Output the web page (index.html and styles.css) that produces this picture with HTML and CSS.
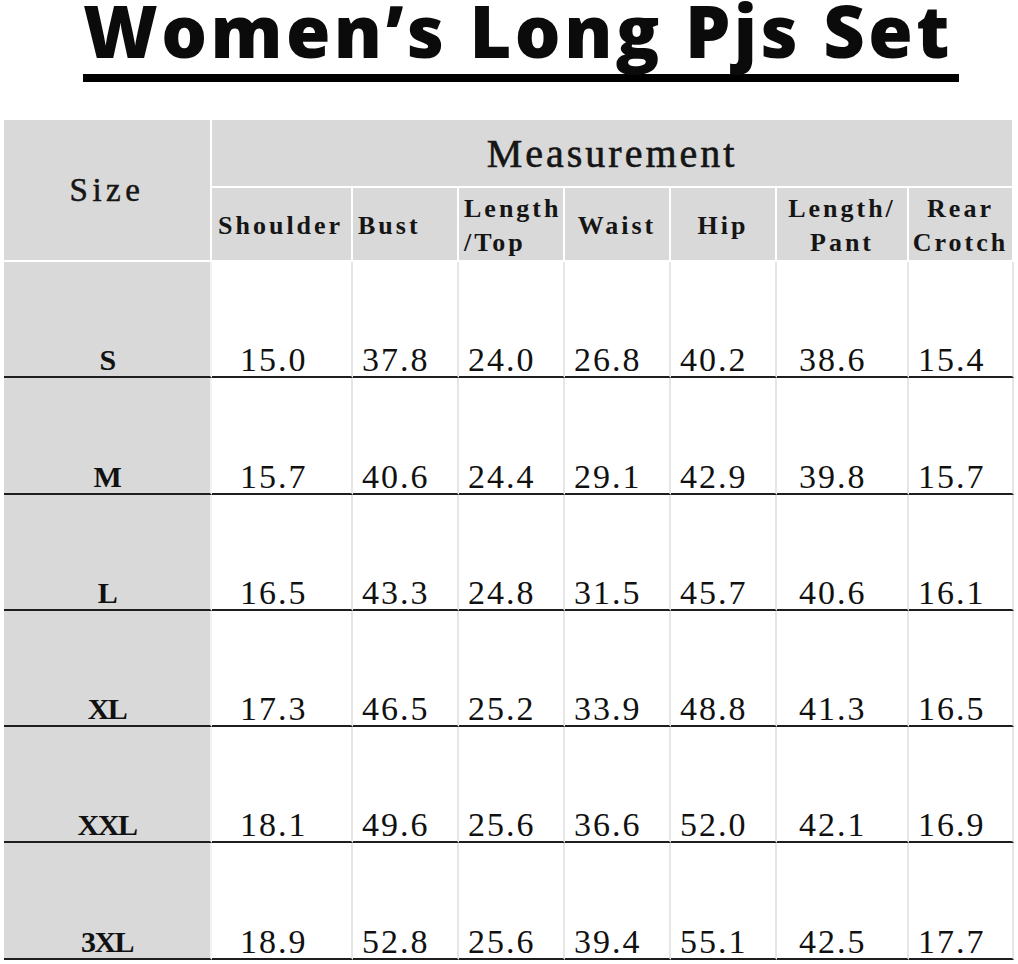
FILE: index.html
```html
<!DOCTYPE html>
<html lang="en">
<head>
<meta charset="utf-8">
<title>Women’s Long Pjs Set</title>
<link rel="stylesheet" href="styles.css">
</head>
<body>
<div class="page">
  <header class="head">
    <h1 class="title">Women’s Long Pjs Set</h1>
  </header>
  <table class="chart">
    <colgroup>
      <col class="w-size"><col class="w-sh"><col class="w-n"><col class="w-n"><col class="w-n"><col class="w-n"><col class="w-pt"><col class="w-rc">
    </colgroup>
    <thead>
      <tr class="hr1">
        <th class="h-size" rowspan="2">Size</th>
        <th class="h-meas" colspan="7">Measurement</th>
      </tr>
      <tr class="hr2">
        <th class="left">Shoulder</th>
        <th class="left">Bust</th>
        <th class="left">Length<br>/Top</th>
        <th>Waist</th>
        <th>Hip</th>
        <th>Length/<br>Pant</th>
        <th class="last">Rear<br>Crotch</th>
      </tr>
    </thead>
    <tbody>
      <tr><td class="sz">S</td><td class="sh">15.0</td><td>37.8</td><td>24.0</td><td>26.8</td><td>40.2</td><td class="pt">38.6</td><td>15.4</td></tr>
      <tr class="tall"><td class="sz">M</td><td class="sh">15.7</td><td>40.6</td><td>24.4</td><td>29.1</td><td>42.9</td><td class="pt">39.8</td><td>15.7</td></tr>
      <tr><td class="sz">L</td><td class="sh">16.5</td><td>43.3</td><td>24.8</td><td>31.5</td><td>45.7</td><td class="pt">40.6</td><td>16.1</td></tr>
      <tr><td class="sz">XL</td><td class="sh">17.3</td><td>46.5</td><td>25.2</td><td>33.9</td><td>48.8</td><td class="pt">41.3</td><td>16.5</td></tr>
      <tr><td class="sz">XXL</td><td class="sh">18.1</td><td>49.6</td><td>25.6</td><td>36.6</td><td>52.0</td><td class="pt">42.1</td><td>16.9</td></tr>
      <tr class="tall"><td class="sz">3XL</td><td class="sh">18.9</td><td>52.8</td><td>25.6</td><td>39.4</td><td>55.1</td><td class="pt">42.5</td><td>17.7</td></tr>
    </tbody>
  </table>
</div>
</body>
</html>
```
FILE: styles.css
```css
html, body {
  margin: 0;
  padding: 0;
  background: #fff;
}

.page {
  width: 1018px;
}

.head {
  display: flex;
  justify-content: flex-start;
  padding-left: 83px;
}

.title {
  margin: 0;
  width: 876px;
  font-family: "Open Sans", "Noto Sans", sans-serif;
  font-weight: 800;
  font-size: 72px;
  line-height: 60px;
  letter-spacing: 3.4px;
  color: #0b0b0b;
  padding-bottom: 14px;
  border-bottom: 8px solid #000;
  white-space: nowrap;
}

.chart {
  margin: 38px 0 0 4px;
  width: 1010px;
  table-layout: fixed;
  border-collapse: separate;
  border-spacing: 0;
}

.w-size { width: 208px; }
.w-sh { width: 141px; }
.w-n { width: 106px; }
.w-pt { width: 132px; }
.w-rc { width: 105px; }

.chart th,
.chart td {
  box-sizing: border-box;
  padding: 0;
}

.chart th {
  background: #d9d9d9;
  border-right: 2px solid #fff;
  border-bottom: 2px solid #fff;
  color: #151515;
  font-family: "Liberation Serif", "Times New Roman", serif;
  text-align: center;
  vertical-align: middle;
}

.hr1 { height: 68px; }
.hr2 { height: 74px; }

.h-size {
  font-size: 33px;
  font-weight: 400;
  letter-spacing: 4.5px;
  padding-top: 16px;
  -webkit-text-stroke: 0.5px #151515;
}

.h-meas {
  font-size: 40px;
  font-weight: 400;
  letter-spacing: 3px;
  padding-top: 24px;
  -webkit-text-stroke: 0.6px #151515;
}

.hr2 th {
  font-size: 26px;
  font-weight: 700;
  line-height: 34px;
  letter-spacing: 3px;
  padding-top: 4px;
}

.hr2 th.left {
  text-align: left;
  padding-left: 5px;
}

.hr2 th.left:first-child {
  padding-left: 6px;
}

.chart tbody tr { height: 116px; }
.chart tbody tr.tall { height: 117px; }

.chart td {
  border-right: 2px solid #e6e6e6;
  border-bottom: 2px solid #1e1e1e;
  vertical-align: bottom;
  text-align: left;
  padding-left: 9px;
  padding-bottom: 0;
  font-family: "Liberation Serif", "Times New Roman", serif;
  font-size: 34px;
  line-height: 33px;
  letter-spacing: 2px;
  color: #111;
}

.chart td.sz {
  background: #d9d9d9;
  border-right: 2px solid #f2f2f2;
  text-align: center;
  padding-left: 0;
  font-weight: 700;
  font-size: 30px;
  letter-spacing: -1.5px;
}

.chart td.sh { padding-left: 28px; }
.chart td.pt { padding-left: 22px; }
```
